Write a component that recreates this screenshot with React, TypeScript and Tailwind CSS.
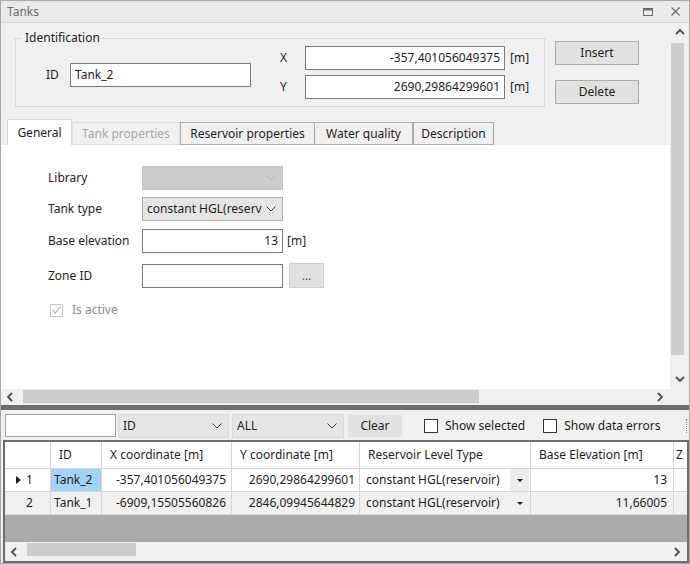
import React from 'react';

type Dir = 'up' | 'down' | 'left' | 'right';

// small bold chevrons used on the scrollbars
function Arrow({ dir }: { dir: Dir }) {
  const pts = {
    up: '1,6 5,2 9,6',
    down: '1,3 5,7 9,3',
    left: '6,1 2,5 6,9',
    right: '3,1 7,5 3,9',
  }[dir];
  return (
    <svg width="10" height="10" viewBox="0 0 10 10" className="text-[#505050]">
      <polyline points={pts} fill="none" stroke="currentColor" strokeWidth="1.8" />
    </svg>
  );
}

// thin chevron used inside combo boxes
function ComboChevron({ color }: { color: string }) {
  return (
    <svg width="10" height="6" viewBox="0 0 10 6" style={{ color }}>
      <polyline points="0.5,0.5 5,5 9.5,0.5" fill="none" stroke="currentColor" strokeWidth="1" />
    </svg>
  );
}

function Combo({ text, disabled, width, className }: { text: string; disabled?: boolean; width: string; className?: string }) {
  return (
    <div
      className={`${width} h-[24px] flex items-center justify-between pl-[4px] pr-[6px] overflow-hidden border ${
        disabled ? 'bg-[#cccccc] border-[#c4c4c4]' : 'bg-[#e5e5e5] border-[#acacac]'
      } ${className ?? ''}`}
    >
      <span className="whitespace-nowrap">{text}</span>
      <span className="shrink-0 pl-[2px]">
        <ComboChevron color={disabled ? '#b4b4b4' : '#3c3c3c'} />
      </span>
    </div>
  );
}

function HScroll({ thumbWidth, height }: { thumbWidth: string; height: string }) {
  return (
    <div className={`${height} flex bg-[#f0f0f0]`}>
      <div className="w-[20px] flex items-center justify-center">
        <Arrow dir="left" />
      </div>
      <div className="flex-1 flex">
        <div className={`${thumbWidth} h-[13px] mt-[1px] ml-[2px] bg-[#cdcdcd]`} />
      </div>
      <div className="w-[20px] flex items-center justify-center">
        <Arrow dir="right" />
      </div>
    </div>
  );
}

const COLS = [
  { title: '', w: 'w-[46px]' },
  { title: 'ID', w: 'w-[51px]' },
  { title: 'X coordinate [m]', w: 'w-[130px]' },
  { title: 'Y coordinate [m]', w: 'w-[128px]' },
  { title: 'Reservoir Level Type', w: 'w-[171px]' },
  { title: 'Base Elevation [m]', w: 'w-[143px]' },
];

const ROWS = [
  { n: '1', id: 'Tank_2', x: '-357,401056049375', y: '2690,29864299601', type: 'constant HGL(reservoir)', base: '13' },
  { n: '2', id: 'Tank_1', x: '-6909,15505560826', y: '2846,09945644829', type: 'constant HGL(reservoir)', base: '11,66005' },
];

export default function App() {
  return (
    <div className="w-[690px] h-[564px] flex flex-col bg-[#f0f0f0] border border-[#a8a8a8] text-[12px] leading-[16px] text-[#1e1e1e] font-['Noto_Sans',sans-serif] overflow-hidden select-none">
      {/* Title bar */}
      <div className="h-[22px] shrink-0 flex items-center justify-between pl-[6px] pr-[9px] bg-[#eaeaea] border-b border-[#d8d8d8] text-[#6d6d6d]">
        <span>Tanks</span>
        <div className="flex items-center gap-[18px]">
          <svg width="10" height="8" viewBox="0 0 10 8">
            <rect x="0.5" y="0.5" width="9" height="7" fill="none" stroke="#6d6d6d" strokeWidth="1" />
            <line x1="0" y1="1.5" x2="10" y2="1.5" stroke="#6d6d6d" strokeWidth="2" />
          </svg>
          <svg width="9" height="9" viewBox="0 0 9 9">
            <path d="M0.5 0.5 L8.5 8.5 M8.5 0.5 L0.5 8.5" stroke="#6d6d6d" strokeWidth="1.3" />
          </svg>
        </div>
      </div>

      {/* Properties panel */}
      <div className="h-[382px] shrink-0 flex flex-col">
        <div className="flex-1 flex min-h-0">
          <div className="flex-1 flex flex-col">
            {/* Header: identification + buttons + tabs */}
            <div className="h-[122px] shrink-0 flex flex-col">
              <div className="flex items-start mt-[15px] ml-[14px]">
                <div className="relative w-[530px] h-[69px] border border-[#d8d8d8] flex items-start">
                  <span className="absolute left-[6px] -top-[9px] px-[3px] bg-[#f0f0f0]">Identification</span>
                  <div className="flex items-center mt-[24px] ml-[30px]">
                    <span className="w-[24px]">ID</span>
                    <div className="w-[181px] h-[24px] bg-white border border-[#7a7a7a] flex items-center pl-[4px]">Tank_2</div>
                  </div>
                  <div className="flex flex-col gap-[5px] mt-[7px] ml-[29px]">
                    <div className="flex items-center">
                      <span className="w-[25px]">X</span>
                      <div className="w-[200px] h-[24px] bg-white border border-[#7a7a7a] flex items-center justify-end pr-[4px]">
                        -357,401056049375
                      </div>
                      <span className="ml-[5px]">[m]</span>
                    </div>
                    <div className="flex items-center">
                      <span className="w-[25px]">Y</span>
                      <div className="w-[200px] h-[24px] bg-white border border-[#7a7a7a] flex items-center justify-end pr-[4px]">
                        2690,29864299601
                      </div>
                      <span className="ml-[5px]">[m]</span>
                    </div>
                  </div>
                </div>
                <div className="flex flex-col ml-[10px] mt-[3px] gap-[15px]">
                  <div className="w-[84px] h-[24px] flex items-center justify-center bg-[#e1e1e1] border border-[#adadad]">Insert</div>
                  <div className="w-[84px] h-[24px] flex items-center justify-center bg-[#e1e1e1] border border-[#adadad]">Delete</div>
                </div>
              </div>

              {/* Tabs */}
              <div className="mt-auto h-[26px] flex items-end pl-[6px]">
                <div className="w-[65px] h-[26px] flex items-center justify-center bg-white border border-b-0 border-[#d9d9d9]">General</div>
                <div className="w-[108px] h-[23px] flex items-center justify-center border border-[#dedede] text-[#a8a8a8]">Tank properties</div>
                <div className="w-[135px] h-[23px] flex items-center justify-center border border-[#acacac]">Reservoir properties</div>
                <div className="w-[98px] h-[23px] flex items-center justify-center border border-l-0 border-[#acacac]">Water quality</div>
                <div className="w-[81px] h-[23px] flex items-center justify-center border border-[#acacac]">Description</div>
              </div>
            </div>

            {/* Tab page: General */}
            <div className="flex-1 bg-white pl-[47px] pt-[21px]">
              <div className="flex items-center h-[24px]">
                <span className="w-[94px]">Library</span>
                <Combo text="" disabled width="w-[141px]" />
              </div>
              <div className="flex items-center h-[24px] mt-[7px]">
                <span className="w-[94px]">Tank type</span>
                <Combo text="constant HGL(reserv" width="w-[141px]" />
              </div>
              <div className="flex items-center h-[24px] mt-[8px]">
                <span className="w-[94px]">Base elevation</span>
                <div className="w-[141px] h-[24px] bg-white border border-[#7a7a7a] flex items-center justify-end pr-[4px]">13</div>
                <span className="ml-[4px]">[m]</span>
              </div>
              <div className="flex items-center h-[25px] mt-[10px]">
                <span className="w-[94px]">Zone ID</span>
                <div className="w-[141px] h-[24px] bg-white border border-[#7a7a7a]" />
                <div className="w-[35px] h-[25px] ml-[6px] flex items-center justify-center bg-[#e1e1e1] border border-[#cdcdcd] text-[#505050]">...</div>
              </div>
              <div className="flex items-center mt-[14px] ml-[2px]">
                <div className="w-[13px] h-[13px] border border-[#c6c6c6] bg-white flex items-center justify-center">
                  <svg width="9" height="8" viewBox="0 0 9 8">
                    <polyline points="0.5,4 3.3,7 8.5,0.5" fill="none" stroke="#b0b0b0" strokeWidth="1.2" />
                  </svg>
                </div>
                <span className="ml-[9px] text-[#8c8c8c]">Is active</span>
              </div>
            </div>
          </div>

          {/* Vertical scrollbar */}
          <div className="w-[19px] flex flex-col bg-[#f0f0f0]">
            <div className="h-[20px] flex items-center justify-center">
              <Arrow dir="up" />
            </div>
            <div className="w-[13px] h-[312px] ml-[1px] bg-[#cdcdcd]" />
            <div className="flex-1" />
            <div className="h-[20px] flex items-center justify-center">
              <Arrow dir="down" />
            </div>
          </div>
        </div>
        <div className="flex">
          <div className="flex-1">
            <HScroll thumbWidth="w-[456px]" height="h-[16px]" />
          </div>
          <div className="w-[19px] bg-[#f0f0f0]" />
        </div>
      </div>

      {/* Splitter */}
      <div className="h-[5px] shrink-0 bg-[#6d6d6d]" />

      {/* Grid toolbar */}
      <div className="h-[30px] shrink-0 flex items-center pl-[4px] pt-[1px]">
        <div className="w-[111px] h-[23px] bg-white border border-[#a3a3a3]" />
        <Combo text="ID" width="w-[111px]" className="ml-[2px] h-[23px] border-[#d9d9d9]" />
        <Combo text="ALL" width="w-[112px]" className="ml-[3px] h-[23px] border-[#d9d9d9]" />
        <div className="w-[54px] h-[22px] ml-[4px] flex items-center justify-center bg-[#e1e1e1] border border-[#e1e1e1]">Clear</div>
        <div className="w-[14px] h-[14px] ml-[22px] bg-white border border-[#333333]" />
        <span className="ml-[7px]">Show selected</span>
        <div className="w-[14px] h-[14px] ml-[18px] bg-white border border-[#333333]" />
        <span className="ml-[7px]">Show data errors</span>
        <div className="ml-auto mr-[2px] w-[1px] h-[14px] border-l border-dotted border-[#8a8a8a]" />
      </div>

      {/* Data grid */}
      <div className="flex-1 min-h-0 ml-[2px] flex flex-col border-2 border-[#6d6d6d] bg-[#ababab] text-[#1e1e1e]">
        <div className="h-[27px] shrink-0 flex bg-white">
          {COLS.map((c, i) => (
            <div key={i} className={`${c.w} shrink-0 flex items-center pl-[8px] border-r border-b border-[#d6d6d6]`}>
              {c.title}
            </div>
          ))}
          <div className="flex-1 flex items-center pl-[2px] border-b border-[#d6d6d6] overflow-hidden">Z</div>
        </div>
        {ROWS.map((r, i) => (
          <div key={r.n} className={`h-[23px] shrink-0 flex ${i === 0 ? 'bg-white' : 'bg-[#f0f0f0]'}`}>
            <div className="w-[46px] shrink-0 flex items-center border-r border-b border-[#d6d6d6]">
              <span className="w-[19px] flex justify-end pr-[3px]">
                {i === 0 && (
                  <svg width="5" height="8" viewBox="0 0 5 8">
                    <polygon points="0,0 5,4 0,8" fill="#1e1e1e" />
                  </svg>
                )}
              </span>
              <span className="ml-[2px]">{r.n}</span>
            </div>
            <div className={`w-[51px] shrink-0 flex items-center pl-[3px] border-r border-b border-[#d6d6d6] ${i === 0 ? 'bg-[#a3d3f7]' : ''}`}>
              {r.id}
            </div>
            <div className="w-[130px] shrink-0 flex items-center justify-end pr-[5px] border-r border-b border-[#d6d6d6]">{r.x}</div>
            <div className="w-[128px] shrink-0 flex items-center justify-end pr-[4px] border-r border-b border-[#d6d6d6]">{r.y}</div>
            <div className="w-[171px] shrink-0 flex items-center border-r border-b border-[#d6d6d6]">
              <span className="flex-1 pl-[6px] whitespace-nowrap">{r.type}</span>
              <span className={`w-[19px] h-full flex items-center justify-center mr-[1px] ${i === 0 ? 'bg-[#ececec]' : ''}`}>
                <svg width="6" height="3" viewBox="0 0 6 3">
                  <polygon points="0,0 6,0 3,3" fill="#1e1e1e" />
                </svg>
              </span>
            </div>
            <div className="w-[143px] shrink-0 flex items-center justify-end pr-[6px] border-r border-b border-[#d6d6d6]">{r.base}</div>
            <div className="flex-1 border-b border-[#d6d6d6]" />
          </div>
        ))}
        <div className="flex-1" />
        <HScroll thumbWidth="w-[109px]" height="h-[19px]" />
      </div>
    </div>
  );
}
